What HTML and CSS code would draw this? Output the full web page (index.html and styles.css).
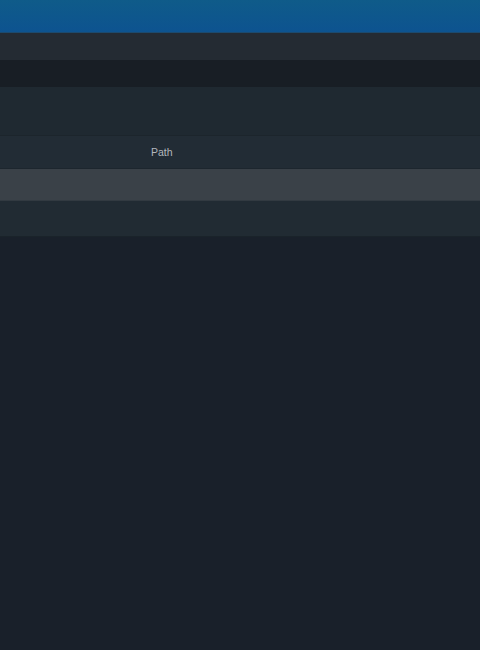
FILE: index.html
```html
<!DOCTYPE html>
<html lang="en">
<head>
    <meta charset="UTF-8">
    <title>Browser</title>
    <link rel="stylesheet" href="styles.css">
</head>
<body>
    <!-- Top bar -->
    <header class="titlebar"></header>
    <div class="toolbar"></div>
    <div class="tabs"></div>

    <!-- File table -->
    <div class="table">
        <div class="table-head"></div>
        <div class="row row-header">
            <span class="col-path">Path</span>
        </div>
        <div class="row row-selected"></div>
        <div class="row"></div>
    </div>
</body>
</html>
```

FILE: styles.css
```css
* {
    margin: 0;
    padding: 0;
    box-sizing: border-box;
}

body {
    font-family: 'Liberation Sans', Arial, sans-serif;
    background-color: #19202a;
    min-height: 100vh;
}

.titlebar {
    height: 33px;
    background: linear-gradient(180deg, #0f5b89, #0d5390);
    border-bottom: 1px solid #1c4a6e;
}

.toolbar {
    height: 27px;
    background-color: #242b33;
}

.tabs {
    height: 27px;
    background-color: #181e25;
}

.table-head {
    height: 49px;
    background-color: #1f2931;
    border-bottom: 1px solid #1c252c;
}

.row {
    height: 33px;
    background-color: #212b33;
    display: flex;
    align-items: center;
    border-bottom: 1px solid #1d262e;
}

.row-header {
    height: 33px;
    background-color: #222c35;
}

.row-selected {
    height: 32px;
    background-color: #3a4148;
    border-bottom: 1px solid #323a41;
}

.row:last-child {
    height: 36px;
    border-bottom: 1px solid #1a232a;
}

.col-path {
    margin-left: 151px;
    font-size: 10.5px;
    color: #b3b8bd;
}
```
